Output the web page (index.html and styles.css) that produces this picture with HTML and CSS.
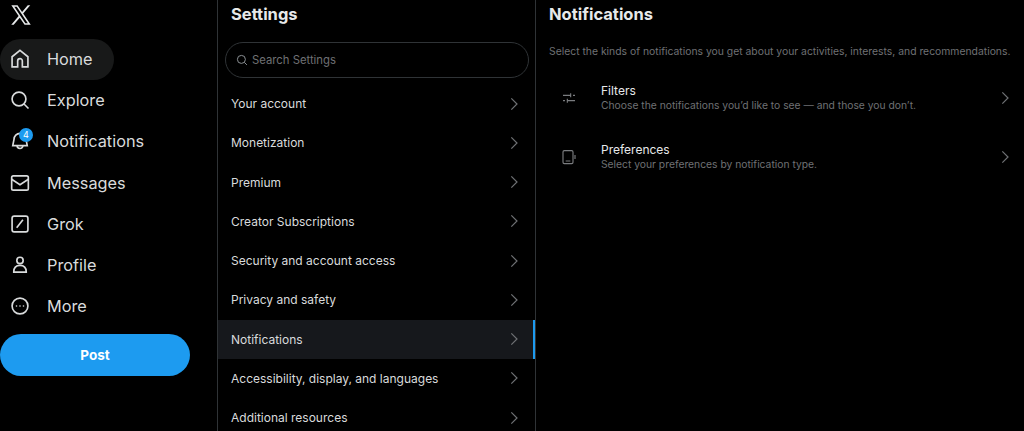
FILE: index.html
```html
<!DOCTYPE html>
<html>
<head>
  <title>Notifications settings</title>
  <link rel="stylesheet" href="styles.css">
</head>
<body>
  <div class="layout">
    <nav class="sidebar">
      <div class="logo">
        <svg viewBox="0 0 24 24" class="logo-icon"><path d="M21.742 21.75l-7.563-11.179 7.056-8.321h-2.456l-5.691 6.714-4.54-6.714H2.359l7.29 10.776L2.25 21.75h2.456l6.035-7.118 4.818 7.118h6.191-.008zM7.739 3.818L18.81 20.182h-2.447L5.29 3.818h2.447z"/></svg>
      </div>
      <a class="nav-item active">
        <svg viewBox="0 0 24 24" class="nav-icon"><path d="M12 1.7l9.5 7.6v12.2h-6.7v-7.2a2.8 2.8 0 0 0-5.6 0v7.2H2.5V9.3z"/></svg>
        <span>Home</span>
      </a>
      <a class="nav-item">
        <svg viewBox="0 0 24 24" class="nav-icon"><circle cx="10.8" cy="10.8" r="8.3"/><path d="M16.8 16.8l5.4 5.4"/></svg>
        <span>Explore</span>
      </a>
      <a class="nav-item">
        <svg viewBox="0 0 24 24" class="nav-icon"><path d="M4.8 10a7.2 7.2 0 0 1 14.4 0l1.5 7.5H3.3z"/><path d="M8.5 17.5a3.5 3.5 0 0 0 7 0"/></svg>
        <span class="badge">4</span>
        <span>Notifications</span>
      </a>
      <a class="nav-item">
        <svg viewBox="0 0 24 24" class="nav-icon"><rect x="2" y="3.5" width="20" height="17" rx="2"/><path d="M2 7.5l10 6.5 10-6.5"/></svg>
        <span>Messages</span>
      </a>
      <a class="nav-item">
        <svg viewBox="0 0 24 24" class="nav-icon"><rect x="2.5" y="2.5" width="19" height="19" rx="2.5"/><path d="M8 16.5L15.5 7"/></svg>
        <span>Grok</span>
      </a>
      <a class="nav-item">
        <svg viewBox="0 0 24 24" class="nav-icon"><circle cx="12" cy="6.5" r="3.8"/><path d="M4.5 20.5c0-5 3-8 7.5-8s7.5 3 7.5 8z"/></svg>
        <span>Profile</span>
      </a>
      <a class="nav-item">
        <svg viewBox="0 0 24 24" class="nav-icon"><circle cx="12" cy="12" r="9.5"/><circle class="dot" cx="7.8" cy="12" r="1"/><circle class="dot" cx="12" cy="12" r="1"/><circle class="dot" cx="16.2" cy="12" r="1"/></svg>
        <span>More</span>
      </a>
      <button class="post-btn">Post</button>
    </nav>

    <section class="settings">
      <h2 class="title">Settings</h2>
      <div class="search-wrap">
        <div class="search">
          <svg viewBox="0 0 24 24" class="search-icon"><circle cx="10.8" cy="10.8" r="8"/><path d="M16.8 16.8l5 5"/></svg>
          <span>Search Settings</span>
        </div>
      </div>
      <a class="row"><span>Your account</span><svg viewBox="0 0 24 24" class="chevron"><path d="M8 3.5l8.5 8.5L8 20.5"/></svg></a>
      <a class="row"><span>Monetization</span><svg viewBox="0 0 24 24" class="chevron"><path d="M8 3.5l8.5 8.5L8 20.5"/></svg></a>
      <a class="row"><span>Premium</span><svg viewBox="0 0 24 24" class="chevron"><path d="M8 3.5l8.5 8.5L8 20.5"/></svg></a>
      <a class="row"><span>Creator Subscriptions</span><svg viewBox="0 0 24 24" class="chevron"><path d="M8 3.5l8.5 8.5L8 20.5"/></svg></a>
      <a class="row"><span>Security and account access</span><svg viewBox="0 0 24 24" class="chevron"><path d="M8 3.5l8.5 8.5L8 20.5"/></svg></a>
      <a class="row"><span>Privacy and safety</span><svg viewBox="0 0 24 24" class="chevron"><path d="M8 3.5l8.5 8.5L8 20.5"/></svg></a>
      <a class="row selected"><span>Notifications</span><svg viewBox="0 0 24 24" class="chevron"><path d="M8 3.5l8.5 8.5L8 20.5"/></svg></a>
      <a class="row"><span>Accessibility, display, and languages</span><svg viewBox="0 0 24 24" class="chevron"><path d="M8 3.5l8.5 8.5L8 20.5"/></svg></a>
      <a class="row"><span>Additional resources</span><svg viewBox="0 0 24 24" class="chevron"><path d="M8 3.5l8.5 8.5L8 20.5"/></svg></a>
    </section>

    <section class="detail">
      <h2 class="title">Notifications</h2>
      <p class="intro">Select the kinds of notifications you get about your activities, interests, and recommendations.</p>
      <a class="option">
        <svg viewBox="0 0 24 24" class="option-icon"><path d="M3 8h11M18 8h3M14.5 5v6M3 16h3M10 16h11M9.5 13v6"/></svg>
        <div class="option-text">
          <div class="option-name">Filters</div>
          <div class="option-desc">Choose the notifications you’d like to see — and those you don’t.</div>
        </div>
        <svg viewBox="0 0 24 24" class="chevron"><path d="M8 3.5l8.5 8.5L8 20.5"/></svg>
      </a>
      <a class="option">
        <svg viewBox="0 0 24 24" class="option-icon"><rect x="3" y="2.5" width="15" height="19.5" rx="2"/><path d="M7 18h7M21 9v6"/></svg>
        <div class="option-text">
          <div class="option-name">Preferences</div>
          <div class="option-desc">Select your preferences by notification type.</div>
        </div>
        <svg viewBox="0 0 24 24" class="chevron"><path d="M8 3.5l8.5 8.5L8 20.5"/></svg>
      </a>
    </section>
  </div>
</body>
</html>
```

FILE: styles.css
```css
html, body {
  margin: 0;
  height: 100%;
  overflow: hidden;
  background-color: #000;
}
body {
  color: #e7e9ea;
  font-family: Inter, "Liberation Sans", Arial, sans-serif;
}
svg {
  flex: none;
  fill: none;
  stroke: currentColor;
}

.layout {
  display: flex;
  height: 431px;
}

/* left nav */
.sidebar {
  width: 218px;
  flex: none;
  box-sizing: border-box;
  border-right: 1px solid #2f3336;
}
.logo {
  height: 39px;
  display: flex;
  align-items: flex-start;
  padding: 3px 0 0 9px;
  box-sizing: border-box;
}
.logo-icon {
  width: 24px;
  height: 24px;
  fill: #e7e9ea;
  stroke: none;
}
.nav-item {
  position: relative;
  display: flex;
  align-items: center;
  gap: 17px;
  width: 114px;
  height: 41.2px;
  padding: 0 0 1px 10px;
  box-sizing: border-box;
  font-size: 16.3px;
  color: #d9dbdc;
  white-space: nowrap;
}
.nav-item.active {
  background-color: #181919;
  border-radius: 21px;
}
.nav-icon {
  width: 20px;
  height: 20px;
  stroke-width: 2;
}
.dot {
  fill: currentColor;
  stroke: none;
}
.badge {
  position: absolute;
  left: 19px;
  top: 7px;
  width: 14px;
  height: 14px;
  border-radius: 50%;
  background-color: #1d9bf0;
  color: #fff;
  font-size: 9px;
  line-height: 13px;
  text-align: center;
}
.post-btn {
  display: block;
  width: 190px;
  height: 42px;
  margin-top: 7px;
  border: none;
  border-radius: 21px;
  background-color: #1d9bf0;
  color: #fff;
  font-family: inherit;
  font-size: 13.5px;
  font-weight: 700;
}

/* settings list */
.settings {
  width: 318px;
  flex: none;
  box-sizing: border-box;
  border-right: 1px solid #2f3336;
}
.title {
  margin: 0;
  padding: 4px 13px 0;
  height: 42px;
  box-sizing: border-box;
  font-size: 16.5px;
  line-height: 20px;
  font-weight: 700;
}
.search-wrap {
  padding: 0 6px 6px 7px;
}
.search {
  display: flex;
  align-items: center;
  gap: 4px;
  height: 34px;
  padding-left: 10px;
  border: 1px solid #2f3336;
  border-radius: 18px;
  font-size: 11.3px;
  color: #6f7174;
}
.search-icon {
  width: 12px;
  height: 12px;
  stroke-width: 2;
  color: #8b9094;
}
.row {
  display: flex;
  align-items: center;
  justify-content: space-between;
  height: 39.25px;
  padding: 0 13px;
  box-sizing: border-box;
  font-size: 12px;
  color: #d9dbdc;
}
.row.selected {
  background-color: #16181c;
  border-right: 2px solid #1d9bf0;
  padding-right: 11px;
}
.chevron {
  width: 16px;
  height: 16px;
  stroke-width: 1.8;
  color: #6f7174;
}

/* notifications detail */
.detail {
  flex: 1;
  min-width: 0;
}
.intro {
  margin: 0;
  padding: 1px 13px 0;
  height: 26px;
  box-sizing: border-box;
  font-size: 10.36px;
  line-height: 16px;
  color: #6f7174;
  white-space: nowrap;
}
.option {
  display: flex;
  align-items: center;
  height: 59px;
  padding: 0 11px 0 25px;
}
.option-icon {
  width: 16px;
  height: 16px;
  stroke-width: 1.7;
  color: #7a7c7f;
}
.option-text {
  flex: 1;
  margin-left: 24px;
}
.option-name {
  font-size: 12px;
  line-height: 15px;
  color: #e7e9ea;
}
.option-desc {
  font-size: 10.3px;
  line-height: 14px;
  color: #6f7174;
}
```
